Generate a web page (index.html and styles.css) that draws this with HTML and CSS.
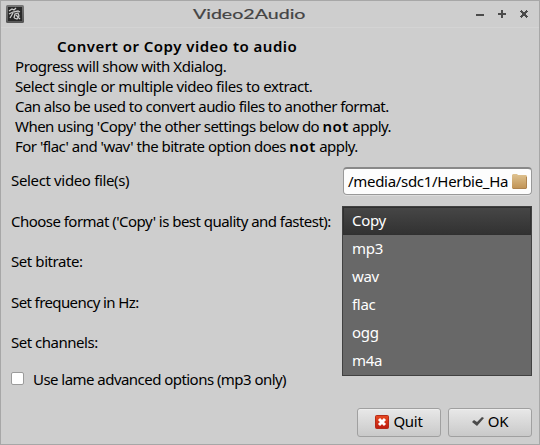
FILE: index.html
```html
<!DOCTYPE html>
<html lang="en">
<head>
<meta charset="utf-8">
<title>Video2Audio</title>
<link rel="stylesheet" href="styles.css">
</head>
<body>
<main class="window">
  <header class="titlebar">
    <svg class="app-icon" width="18" height="18" viewBox="0 0 18 18">
      <defs><linearGradient id="tile" x2="0" y2="1"><stop stop-color="#777"/><stop offset="1" stop-color="#555"/></linearGradient></defs>
      <rect width="18" height="18" rx="1.5" fill="url(#tile)"/>
      <rect x="2" y="2" width="14" height="14" fill="#292929"/>
      <path d="M3 6L6 4L8 5L10 3M3 9L7 7L12 6L14 7M4 13L7 8M8 13L9 9L12 8L13 11L11 14L8 13M10 10L14 14" fill="none" stroke="#ccc" stroke-width="1.3"/>
    </svg>
    <h1 class="title">Video2Audio</h1>
    <svg class="controls" width="54" height="10" viewBox="0 0 54 10" fill="#4b4b4b">
      <path d="M0 5h8v2H0zM22 4h3V1h2v3h3v2h-3v3h-2V6h-3z"/>
      <path d="M45 1h1v1h1v1h2V2h1V1h1v1h1v1h-1v1h-1v2h1v1h1v1h-1v1h-1V8h-1V7h-2v1h-1v1h-1V8h-1V7h1V6h1V4h-1V3h-1V2h1z"/>
    </svg>
  </header>
  <section class="intro">
    <h2>Convert or Copy video to audio</h2>
    <p class="l1">Progress will show with Xdialog.</p>
    <p class="l2">Select single or multiple video files to extract.</p>
    <p class="l3">Can also be used to convert audio files to another format.</p>
    <p class="l4">When using 'Copy' the other settings below do <b>not</b> apply.</p>
    <p class="l5">For 'flac' and 'wav' the bitrate option does <b>not</b> apply.</p>
  </section>
  <section class="form">
    <div class="row file-row">
      <span class="file-label">Select video file(s)</span>
      <div class="file-input">
        <span class="path">/media/sdc1/Herbie_Ha</span>
        <svg class="folder" width="15" height="15" viewBox="0 0 15 15">
          <defs><linearGradient id="folder" x2="0" y2="1"><stop stop-color="#dfc391"/><stop offset="1" stop-color="#bf9153"/></linearGradient></defs>
          <path d="M1 0h4l1 1h8l1 1v12l-1 1H1l-1-1V1z" fill="url(#folder)"/>
          <path d="M1 14.5h13M14.5 3v11" stroke="#ad8350" fill="none"/>
        </svg>
      </div>
    </div>
    <div class="row format-row">
      <span class="format-label">Choose format ('Copy' is best quality and fastest):</span>
      <ul class="menu">
        <li class="selected">Copy</li><li>mp3</li><li>wav</li><li>flac</li><li>ogg</li><li>m4a</li>
      </ul>
    </div>
    <div class="row"><span class="bitrate-label">Set bitrate:</span></div>
    <div class="row"><span class="frequency-label">Set frequency in Hz:</span></div>
    <div class="row"><span class="channels-label">Set channels:</span></div>
    <label class="check-row"><span class="box"></span><span class="lame-label">Use lame advanced options (mp3 only)</span></label>
  </section>
  <footer class="actions">
    <button class="quit">
      <svg width="14" height="14" viewBox="0 0 14 14">
        <defs><linearGradient id="red" x2="0" y2="1"><stop stop-color="#e84a20"/><stop offset="1" stop-color="#bd1d12"/></linearGradient></defs>
        <rect x=".5" y=".5" width="13" height="13" rx="1" fill="url(#red)" stroke="#b52b18"/>
        <path d="M4 4l6 6M10 4l-6 6" stroke="#fff" stroke-width="3"/>
      </svg>
      <span>Quit</span>
    </button>
    <button class="ok">
      <svg width="12" height="10" viewBox="0 0 12 10"><path d="M0 5l2-2 3 2 5-5 2 1-7 8z" fill="#4a4a4a"/></svg>
      <span>OK</span>
    </button>
  </footer>
</main>
</body>
</html>
```
FILE: styles.css
```css
* { box-sizing: border-box; }
body { margin: 0; background: #cecece; color: #000; font: 15px/20px "Noto Sans", sans-serif; }
.window { width: 540px; height: 445px; border: 1px solid #a7a7a7; background: #cecece; overflow: hidden; }
.titlebar { height: 27px; border-bottom: 1px solid #d4d4d4; padding: 0 9px 0 5px; display: flex; align-items: center; justify-content: space-between; }
.title { margin: 0 2px 0 0; font: 14px/26px Lato, sans-serif; color: #444; -webkit-text-stroke: .2px #444; transform: scaleX(1.4); }
.intro { height: 133px; padding: 8px 0 0 14px; white-space: nowrap; }
h2, p { margin: 0; height: 20px; }
h2 { padding-left: 42px; font-size: 15px; line-height: 20px; font-weight: 600; letter-spacing: .48px; }
b { font-weight: 600; letter-spacing: .5px; }
.form { padding: 0 7px 0 10px; white-space: nowrap; }
.row { height: 40.5px; display: flex; align-items: center; justify-content: space-between; position: relative; }
.row > span, .check-row > .lame-label { margin-bottom: 2px; }
.file-input { width: 189px; height: 28px; border: 1px solid #999; border-top: 2px solid #898989; border-radius: 4px; background: #fdfdfd; padding: 0 4px; display: flex; align-items: center; justify-content: space-between; box-shadow: 0 1px #ddd; }
.path { letter-spacing: -.3px; margin-bottom: 2px; }
.folder { flex: none; }
.menu { position: absolute; z-index: 1; left: 331px; top: 4.5px; width: 190px; height: 170px; margin: 0; padding: 0; list-style: none; border: 1px solid #414141; background: #686868; color: #fff; }
.menu li { height: 28px; padding-left: 9px; line-height: 27px; letter-spacing: -.3px; }
.menu .selected { background: linear-gradient(#464646, #323232); border: 1px solid #303030; padding-left: 8px; line-height: 24px; }
.check-row { height: 32px; display: flex; align-items: center; gap: 9px; }
.box { width: 13px; height: 13px; background: #fff; border: 1px solid #9b9b9b; border-radius: 2px; margin-bottom: 2px; }
.actions { display: flex; justify-content: flex-end; gap: 7px; padding: 12px 7px 0 0; }
button { width: 84px; height: 29px; border: 1px solid #a0a0a0; border-radius: 3px; background: linear-gradient(#e8e8e8, #c9c9c9); display: flex; align-items: center; justify-content: center; gap: 4px; color: #000; font: 15px/20px "Noto Sans", sans-serif; box-shadow: inset 0 1px #eee; padding: 0; }
button span { margin-bottom: 2px; letter-spacing: -.3px; }
.l1, .l2, .bitrate-label { letter-spacing: -.42px; }
.l3 { letter-spacing: -.55px; }
.l4, .l5 { letter-spacing: -.52px; }
.file-label { letter-spacing: -.35px; }
.format-label { letter-spacing: -.53px; }
.frequency-label { letter-spacing: -.6px; }
.channels-label { letter-spacing: -.48px; }
.lame-label { letter-spacing: -.54px; }
```
